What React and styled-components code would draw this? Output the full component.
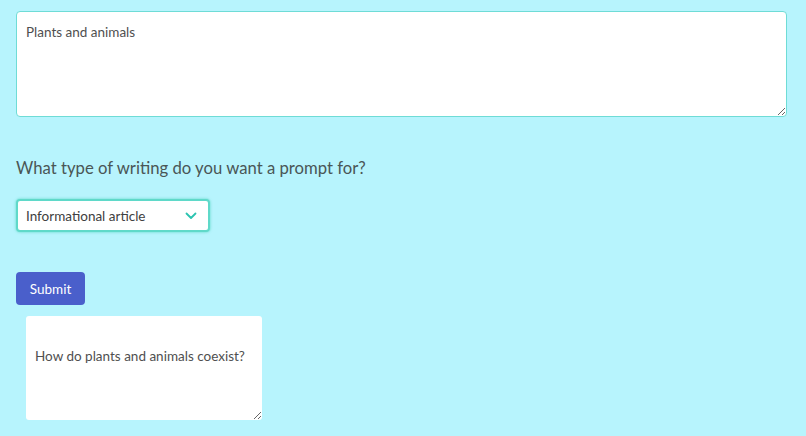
import React, { useState } from "react";
import styled, { createGlobalStyle } from "styled-components";

const GlobalStyle = createGlobalStyle`
  html, body {
    margin: 0;
    padding: 0;
    background-color: #b7f4fd;
    font-family: Lato, "Noto Sans", sans-serif;
  }
`;

const Page = styled.main`
  padding: 11px 19px 0 16px;
  display: flex;
  flex-direction: column;
  align-items: flex-start;
`;

const TopicInput = styled.textarea`
  box-sizing: border-box;
  width: 100%;
  height: 106px;
  padding: 10px 9px;
  border: 1px solid #6fdcd6;
  border-radius: 4px;
  background: #ffffff;
  color: #4f4f4f;
  font-family: inherit;
  font-size: 13.5px;
  line-height: 20px;
  resize: vertical;
  outline: none;
`;

const Question = styled.h2`
  margin: 39px 0 0;
  color: #4a5656;
  font-size: 16.7px;
  font-weight: 400;
  line-height: 24px;
`;

const SelectWrap = styled.div`
  position: relative;
  margin-top: 19px;
  width: 194px;
`;

const Select = styled.select`
  box-sizing: border-box;
  width: 100%;
  height: 33px;
  padding: 0 30px 0 8px;
  appearance: none;
  border: 2px solid #5fd9c9;
  border-radius: 4px;
  box-shadow: 0 0 2px 1px rgba(95, 217, 201, 0.5);
  background: #ffffff;
  color: #404040;
  font-family: inherit;
  font-size: 13.5px;
  outline: none;
`;

const Chevron = styled.svg`
  position: absolute;
  right: 13px;
  top: 13px;
  pointer-events: none;
`;

const SubmitButton = styled.button`
  margin-top: 40px;
  width: 69px;
  height: 33px;
  padding: 0;
  border: none;
  border-radius: 4px;
  background-color: #4a5fcb;
  color: #ffffff;
  font-family: inherit;
  font-size: 13.5px;
  cursor: pointer;
`;

const Output = styled.textarea`
  box-sizing: border-box;
  margin: 11px 0 0 10px;
  width: 236px;
  height: 104px;
  padding: 9px 9px;
  border: none;
  border-radius: 3px;
  background: #ffffff;
  color: #4f4f4f;
  font-family: inherit;
  font-size: 13.5px;
  line-height: 21px;
  resize: vertical;
  outline: none;
`;

export default function App() {
  const [topic, setTopic] = useState("Plants and animals");
  const [kind, setKind] = useState("Informational article");

  return (
    <>
      <GlobalStyle />
      <Page>
        <TopicInput value={topic} onChange={(e) => setTopic(e.target.value)} />
        <Question>What type of writing do you want a prompt for?</Question>
        <SelectWrap>
          <Select value={kind} onChange={(e) => setKind(e.target.value)}>
            <option>Informational article</option>
            <option>Story</option>
            <option>Poem</option>
            <option>Persuasive essay</option>
          </Select>
          <Chevron width="12" height="8" viewBox="0 0 12 8">
            <path
              d="M1.5 1.5 L6 6 L10.5 1.5"
              fill="none"
              stroke="#2cc3b0"
              strokeWidth="1.8"
              strokeLinecap="round"
              strokeLinejoin="round"
            />
          </Chevron>
        </SelectWrap>
        <SubmitButton>Submit</SubmitButton>
        <Output readOnly value={"\nHow do plants and animals coexist?"} />
      </Page>
    </>
  );
}
